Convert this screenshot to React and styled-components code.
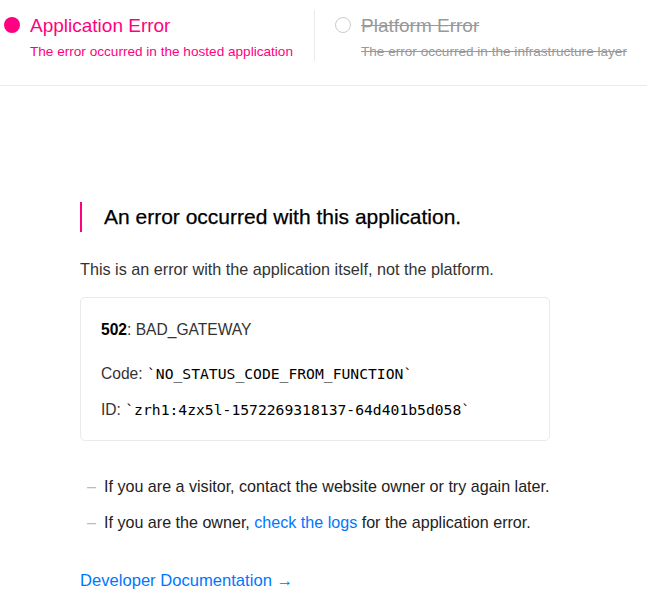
import styled, { createGlobalStyle } from "styled-components";

const GlobalStyle = createGlobalStyle`
  html, body {
    margin: 0;
    padding: 0;
    background: #fff;
    font-family: "Liberation Sans", Arial, sans-serif;
    -webkit-font-smoothing: antialiased;
  }
`;

const Header = styled.header`
  display: flex;
  height: 86px;
  border-bottom: 1px solid #eaeaea;
  box-sizing: border-box;
`;

const Tab = styled.div`
  display: flex;
  align-items: flex-start;
  padding: 15px 0 0 ${(p) => (p.$active ? 4 : 20)}px;
  width: ${(p) => (p.$active ? "310px" : "auto")};
  color: ${(p) => (p.$active ? "#ff0080" : "#999")};
  text-decoration: ${(p) => (p.$active ? "none" : "line-through")};
`;

const Divider = styled.div`
  width: 1px;
  height: 51px;
  margin-top: 10px;
  background: #eaeaea;
`;

const Dot = styled.span`
  flex: none;
  width: 16px;
  height: 16px;
  margin-top: 2px;
  margin-right: 10px;
  border-radius: 50%;
  box-sizing: border-box;
  background: ${(p) => (p.$active ? "#ff0080" : "#fff")};
  border: ${(p) => (p.$active ? "none" : "1px solid #ccc")};
`;

const TabText = styled.div`
  display: flex;
  flex-direction: column;
`;

const TabTitle = styled.div`
  font-size: 19px;
  line-height: 22px;
`;

const TabSub = styled.div`
  font-size: 13.6px;
  line-height: 16px;
  margin-top: 7px;
`;

const Main = styled.main`
  width: 470px;
  margin-left: 80px;
  padding-top: 116px;
`;

const Heading = styled.h1`
  margin: 0;
  border-left: 2px solid #ff0080;
  padding: 3px 0 3px 22px;
  font-size: 21px;
  line-height: 24px;
  font-weight: 500;
  color: #000;
  -webkit-text-stroke: 0.25px #000;
`;

const Lead = styled.p`
  margin: 27px 0 0;
  font-size: 16.2px;
  line-height: 20px;
  color: #333;
`;

const Card = styled.div`
  margin-top: 18px;
  border: 1px solid #eaeaea;
  border-radius: 5px;
  padding: 22px 20px 20px;
  font-size: 15.6px;
  color: #333;
`;

const CardLine = styled.p`
  margin: ${(p) => (p.$first ? "0 0 24px" : "16px 0 0")};
  line-height: 20px;
  b {
    color: #000;
  }
`;

const Mono = styled.code`
  font-family: "DejaVu Sans Mono", monospace;
  font-size: 14.7px;
  color: #000;
`;

const Notes = styled.ul`
  list-style: none;
  margin: 35px 0 0;
  padding: 0;
`;

const Note = styled.li`
  display: flex;
  font-size: 16.1px;
  line-height: 20px;
  color: #222;
  white-space: nowrap;
  & + & {
    margin-top: 16px;
  }
  &::before {
    content: "–";
    color: #bbb;
    width: 24px;
    padding-left: 7px;
    box-sizing: border-box;
  }
`;

const Link = styled.a`
  color: #0076ff;
  text-decoration: none;
`;

const DocLink = styled(Link)`
  display: inline-block;
  margin-top: 39px;
  font-size: 16.6px;
  line-height: 20px;
`;

export default function App() {
  return (
    <>
      <GlobalStyle />
      <Header>
        <Tab $active>
          <Dot $active />
          <TabText>
            <TabTitle>Application Error</TabTitle>
            <TabSub>The error occurred in the hosted application</TabSub>
          </TabText>
        </Tab>
        <Divider />
        <Tab>
          <Dot />
          <TabText>
            <TabTitle>Platform Error</TabTitle>
            <TabSub>The error occurred in the infrastructure layer</TabSub>
          </TabText>
        </Tab>
      </Header>
      <Main>
        <Heading>An error occurred with this application.</Heading>
        <Lead>This is an error with the application itself, not the platform.</Lead>
        <Card>
          <CardLine $first>
            <b>502</b>: BAD_GATEWAY
          </CardLine>
          <CardLine>
            Code: <Mono>`NO_STATUS_CODE_FROM_FUNCTION`</Mono>
          </CardLine>
          <CardLine>
            ID: <Mono>`zrh1:4zx5l-1572269318137-64d401b5d058`</Mono>
          </CardLine>
        </Card>
        <Notes>
          <Note>If you are a visitor, contact the website owner or try again later.</Note>
          <Note>
            <span>
              If you are the owner, <Link href="#">check the logs</Link> for the application error.
            </span>
          </Note>
        </Notes>
        <DocLink href="#">Developer Documentation →</DocLink>
      </Main>
    </>
  );
}
